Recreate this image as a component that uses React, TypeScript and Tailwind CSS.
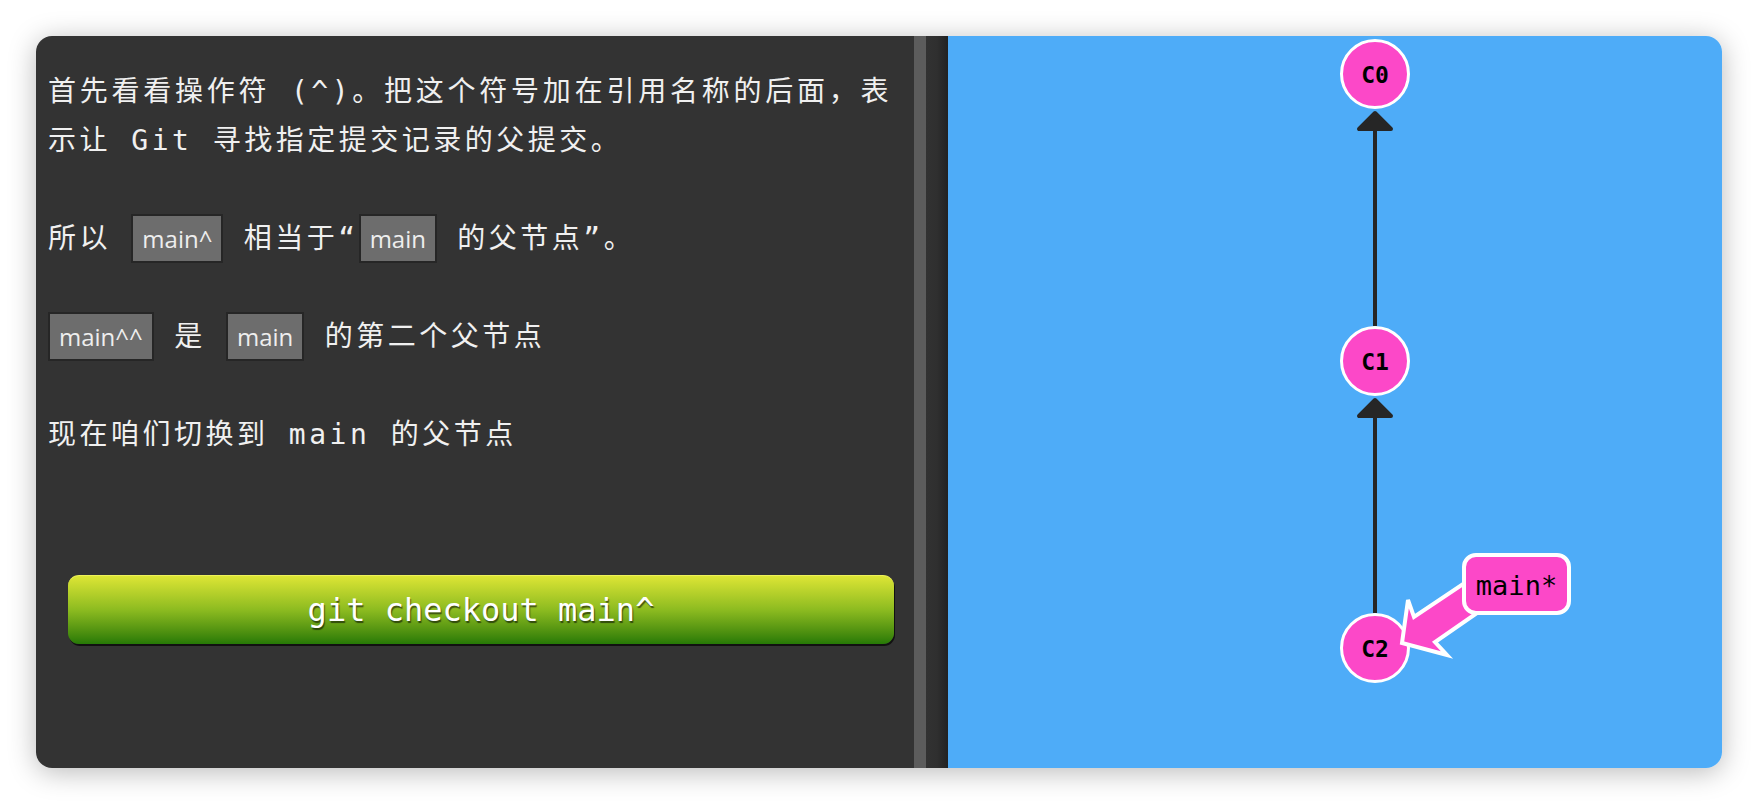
const mono = "font-['DejaVu_Sans_Mono','Noto_Sans_CJK_SC',monospace]";

const Chip = ({ children }: { children: string }) => (
  <span className="inline-block h-[49px] align-top border-2 border-[#262626] bg-[#6d6d6d] px-[9px] font-['Open_Sans',sans-serif] text-[24px] leading-[45px] tracking-normal text-[#eeeeee]">
    {children}
  </span>
);

const Commit = ({ y, label }: { y: number; label: string }) => (
  <g>
    <circle cx={427} cy={y} r={33.5} fill="#fc48c8" stroke="#ffffff" strokeWidth={3} />
    <text
      x={427}
      y={y + 1}
      textAnchor="middle"
      dominantBaseline="central"
      fontFamily="DejaVu Sans Mono, monospace"
      fontWeight="bold"
      fontSize={23}
      fill="#000"
    >
      {label}
    </text>
  </g>
);

const Edge = ({ top, bottom }: { top: number; bottom: number }) => (
  <g>
    <line x1={427} y1={top + 18} x2={427} y2={bottom} stroke="#262626" strokeWidth={4} />
    <polygon
      points={`427,${top + 2} 411,${top + 18} 443,${top + 18}`}
      fill="#262626"
      stroke="#262626"
      strokeWidth={4}
      strokeLinejoin="round"
    />
  </g>
);

const GitGraph = () => (
  <svg viewBox="0 0 774 732" className="h-full w-full">
    <Edge top={75} bottom={290} />
    <Edge top={362} bottom={577} />
    <Commit y={38} label="C0" />
    <Commit y={325} label="C1" />
    <Commit y={612} label="C2" />
    <path
      d="M454 607 L460 564 L466 581 L530 538 L542 568 L487 606 L499 619 Z"
      fill="#fc48c8"
      stroke="#ffffff"
      strokeWidth={4}
      strokeLinejoin="miter"
    />
    <rect x={516} y={519} width={105} height={58} rx={12} fill="#fc48c8" stroke="#ffffff" strokeWidth={4} />
    <text
      x={568.5}
      y={549}
      textAnchor="middle"
      dominantBaseline="central"
      fontFamily="DejaVu Sans Mono, monospace"
      fontSize={27}
      fill="#000"
    >
      main*
    </text>
  </svg>
);

export default function App() {
  return (
    <div className="min-h-screen bg-white p-[36px]">
      <div className="flex h-[732px] w-[1686px] overflow-hidden rounded-[16px] shadow-[0_4px_28px_rgba(0,0,0,0.28)]">
        {/* instructions */}
        <div className="flex w-[878px] flex-col bg-[#333333]">
          <div
            className={`${mono} flex flex-col gap-[49px] pl-[12px] pr-[22px] pt-[31px] text-[28px] leading-[49px] tracking-[3.5px] text-[#f0f0f0]`}
          >
            <p className="text-justify">首先看看操作符 (^)。把这个符号加在引用名称的后面，表示让 Git 寻找指定提交记录的父提交。</p>
            <p>
              所以 <Chip>main^</Chip> 相当于“<Chip>main</Chip> 的父节点”。
            </p>
            <p>
              <Chip>main^^</Chip> 是 <Chip>main</Chip> 的第二个父节点
            </p>
            <p>现在咱们切换到 main 的父节点</p>
          </div>
          <button className="ml-[32px] mt-[116px] flex h-[69px] w-[826px] items-center justify-center rounded-[11px] border-t border-[#eef25a] bg-gradient-to-b from-[#dde535] via-[#8cbb20] to-[#267a07] shadow-[1px_2px_0_#111111]">
            <span className="font-['DejaVu_Sans_Mono',monospace] text-[32px] text-white [text-shadow:1px_2px_1px_rgba(0,0,0,0.55)]">
              git checkout main^
            </span>
          </button>
        </div>
        <div className="w-[12px] bg-[#5c5c5c]" />
        <div className="w-[22px] bg-gradient-to-r from-[#323232] via-[#2f2f2f] to-[#222222]" />
        {/* visualization */}
        <div className="flex-1 bg-[#4eacf8]">
          <GitGraph />
        </div>
      </div>
    </div>
  );
}
